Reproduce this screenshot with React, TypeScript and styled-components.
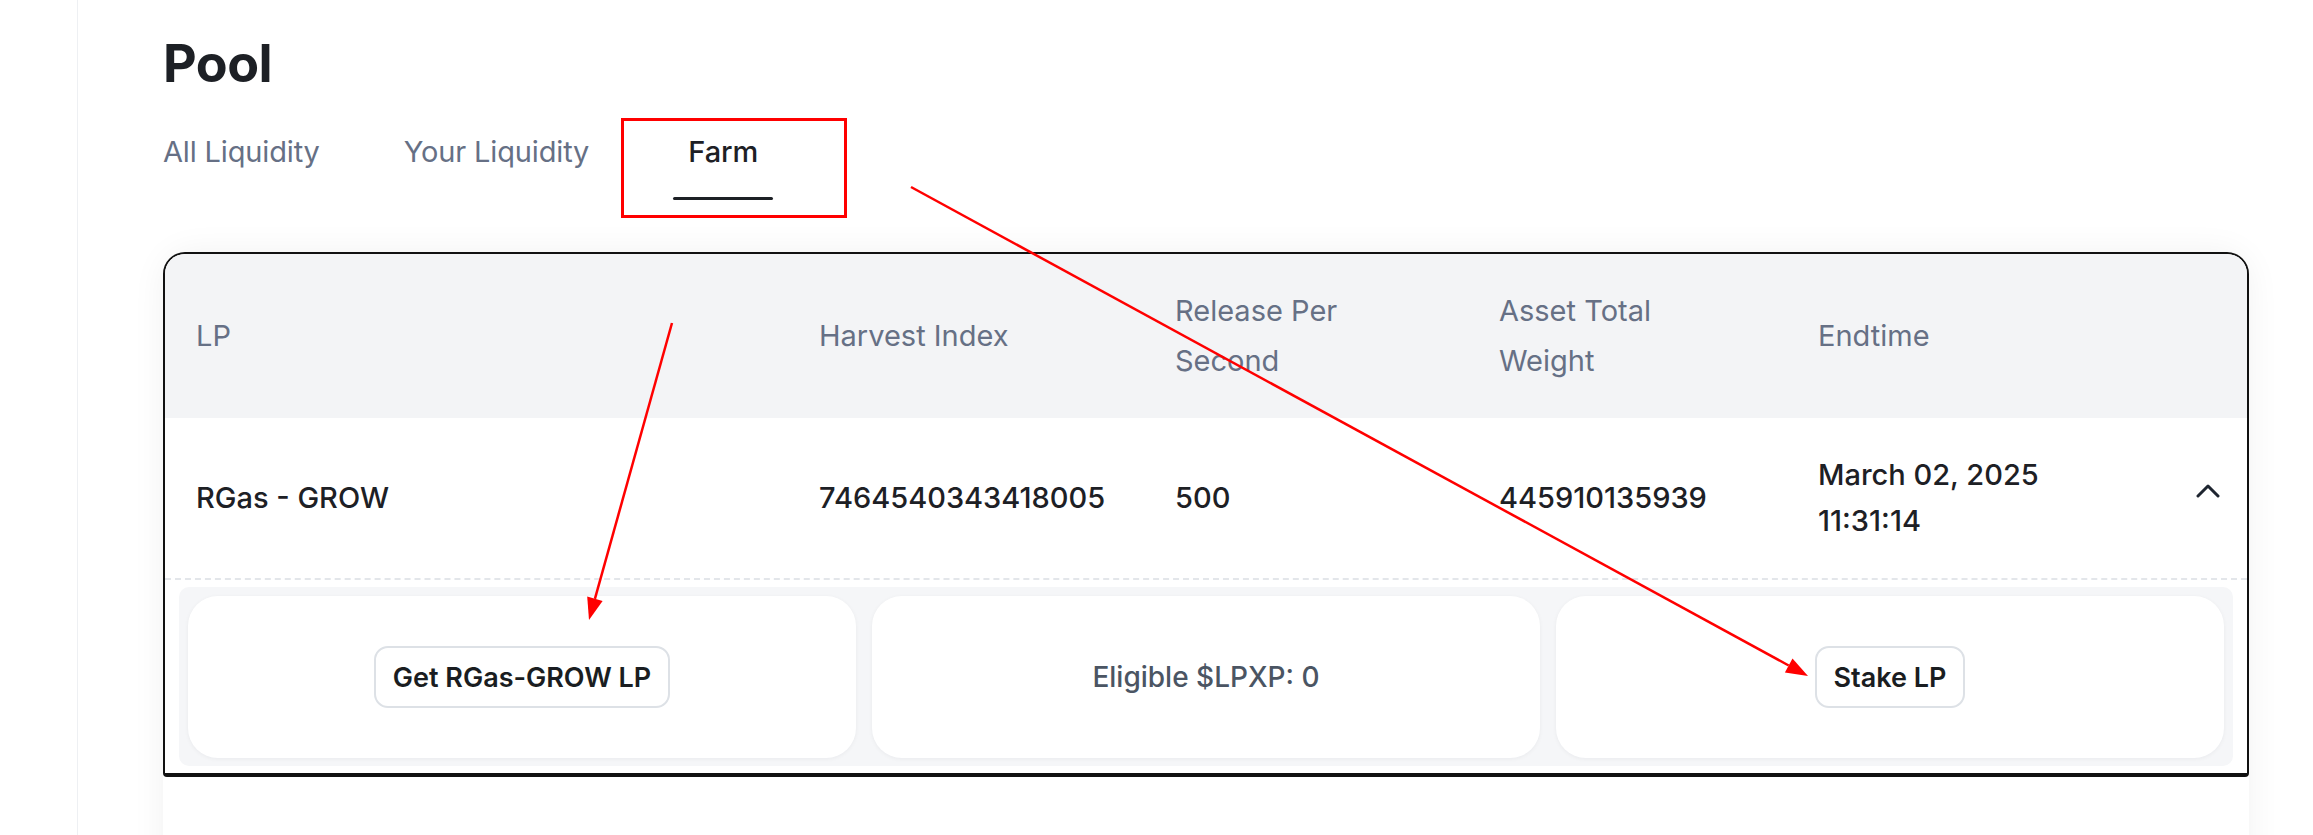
import React from "react";
import styled, { createGlobalStyle } from "styled-components";

const GlobalStyle = createGlobalStyle`
  html, body {
    margin: 0;
    padding: 0;
    height: 835px;
    overflow: hidden;
    background: #ffffff;
  }
  body {
    font-family: Inter, "Liberation Sans", sans-serif;
    color: #1d2025;
  }
  *, *::before, *::after { box-sizing: border-box; }
`;

const Page = styled.div`
  position: relative;
  display: flex;
  width: 2313px;
  height: 835px;
  overflow: hidden;
  background: #ffffff;
`;

const Sidebar = styled.aside`
  flex: 0 0 78px;
  height: 100%;
  border-right: 1px solid #eef0f3;
`;

const Main = styled.main`
  flex: 1;
  display: flex;
  flex-direction: column;
  padding: 32px 64px 0 85px;
  min-width: 0;
`;

const Title = styled.h1`
  margin: 0;
  font-size: 52px;
  line-height: 64px;
  font-weight: 700;
  letter-spacing: -0.5px;
  color: #1d2025;
`;

const Tabs = styled.nav`
  display: flex;
  margin-top: 38px;
`;

const Tab = styled.div`
  display: flex;
  flex-direction: column;
  padding: 0 42px;
  cursor: pointer;
  &:first-child { padding-left: 0; }
`;

const TabLabel = styled.span<{ $active?: boolean }>`
  min-width: 100px;
  text-align: center;
  font-size: 29px;
  line-height: 36px;
  letter-spacing: -0.15px;
  font-weight: ${(p) => (p.$active ? 500 : 400)};
  color: ${(p) => (p.$active ? "#1d2025" : "#667085")};
`;

const Indicator = styled.span<{ $active?: boolean }>`
  margin-top: 27px;
  height: 3px;
  border-radius: 2px;
  background: ${(p) => (p.$active ? "#1d2025" : "transparent")};
`;

const Panel = styled.section`
  margin-top: 52px;
  min-height: 700px;
  background: #ffffff;
  border-radius: 30px;
  box-shadow: 0 0 34px rgba(15, 23, 42, 0.06);
`;

const Table = styled.div`
  border: 2px solid #111111;
  border-bottom-width: 4px;
  border-radius: 22px 22px 4px 4px;
  overflow: hidden;
  background: #ffffff;
`;

const Row = styled.div`
  display: grid;
  grid-template-columns: 623px 356px 324px 319px 349px 80px;
  align-items: center;
  padding-left: 31px;
`;

const HeaderRow = styled(Row)`
  background: #f3f4f6;
  min-height: 164px;
  padding-top: 32px;
  padding-bottom: 32px;
`;

const HeaderCell = styled.div`
  padding-right: 72px;
  font-size: 29px;
  line-height: 50px;
  font-weight: 400;
  color: #667085;
`;

const BodyRow = styled(Row)`
  height: 162px;
  border-bottom: 2px dashed #e3e6ea;
`;

const BodyCell = styled.div`
  padding-right: 72px;
  font-size: 29px;
  line-height: 46px;
  font-weight: 500;
  color: #1d2025;
  white-space: nowrap;
`;

const Line = styled.span`
  display: block;
`;

const ChevronCell = styled.div`
  display: flex;
  justify-content: flex-end;
  padding-right: 27px;
  padding-bottom: 14px;
  color: #1e2530;
`;

const Expanded = styled.div`
  height: 193px;
  padding: 7px 14px;
`;

const Drawer = styled.div`
  height: 100%;
  display: grid;
  grid-template-columns: repeat(3, 1fr);
  gap: 16px;
  padding: 9px 9px 8px 9px;
  background: #f5f6f8;
  border-radius: 10px;
`;

const ActionCard = styled.div`
  display: flex;
  align-items: center;
  justify-content: center;
  background: #ffffff;
  border-radius: 30px;
  box-shadow: 0 1px 4px rgba(15, 23, 42, 0.05);
`;

const ActionButton = styled.button`
  height: 62px;
  padding: 0 17px;
  border: 2px solid #dde1e6;
  border-radius: 14px;
  background: #ffffff;
  font-family: inherit;
  font-size: 27px;
  font-weight: 600;
  color: #1a1d21;
  cursor: pointer;
`;

const InfoText = styled.span`
  font-size: 28px;
  font-weight: 500;
  color: #4b5563;
`;

const Annotations = styled.svg`
  position: absolute;
  top: 0;
  left: 0;
  pointer-events: none;
  z-index: 10;
`;

const Chevron = () => (
  <svg width="24" height="14" viewBox="0 0 24 14" fill="none">
    <polyline
      points="2,12 12,2 22,12"
      stroke="currentColor"
      strokeWidth="3"
      strokeLinecap="round"
      strokeLinejoin="round"
    />
  </svg>
);

const tabs = [
  { label: "All Liquidity", active: false },
  { label: "Your Liquidity", active: false },
  { label: "Farm", active: true },
];

export default function App() {
  return (
    <>
      <GlobalStyle />
      <Page>
        <Sidebar />
        <Main>
          <Title>Pool</Title>
          <Tabs>
            {tabs.map((t) => (
              <Tab key={t.label}>
                <TabLabel $active={t.active}>{t.label}</TabLabel>
                <Indicator $active={t.active} />
              </Tab>
            ))}
          </Tabs>
          <Panel>
            <Table>
              <HeaderRow>
                <HeaderCell>LP</HeaderCell>
                <HeaderCell>Harvest Index</HeaderCell>
                <HeaderCell>Release Per Second</HeaderCell>
                <HeaderCell>Asset Total Weight</HeaderCell>
                <HeaderCell>Endtime</HeaderCell>
                <div />
              </HeaderRow>
              <BodyRow>
                <BodyCell>RGas - GROW</BodyCell>
                <BodyCell>7464540343418005</BodyCell>
                <BodyCell>500</BodyCell>
                <BodyCell>445910135939</BodyCell>
                <BodyCell>
                  <Line>March 02, 2025</Line>
                  <Line>11:31:14</Line>
                </BodyCell>
                <ChevronCell>
                  <Chevron />
                </ChevronCell>
              </BodyRow>
              <Expanded>
                <Drawer>
                  <ActionCard>
                    <ActionButton>Get RGas-GROW LP</ActionButton>
                  </ActionCard>
                  <ActionCard>
                    <InfoText>Eligible $LPXP: 0</InfoText>
                  </ActionCard>
                  <ActionCard>
                    <ActionButton>Stake LP</ActionButton>
                  </ActionCard>
                </Drawer>
              </Expanded>
            </Table>
          </Panel>
        </Main>
        <Annotations width="2313" height="835" viewBox="0 0 2313 835">
          <rect x="622.5" y="119.5" width="223" height="97" fill="none" stroke="#ff0000" strokeWidth="3" />
          <line x1="672" y1="323" x2="594.9" y2="598.8" stroke="#ff0000" strokeWidth="2.5" />
          <polygon points="589,620 602.6,601 587.2,596.6" fill="#ff0000" />
          <line x1="911" y1="187" x2="1788.7" y2="665.5" stroke="#ff0000" strokeWidth="2.5" />
          <polygon points="1808,676 1784.9,672.5 1792.5,658.5" fill="#ff0000" />
        </Annotations>
      </Page>
    </>
  );
}
